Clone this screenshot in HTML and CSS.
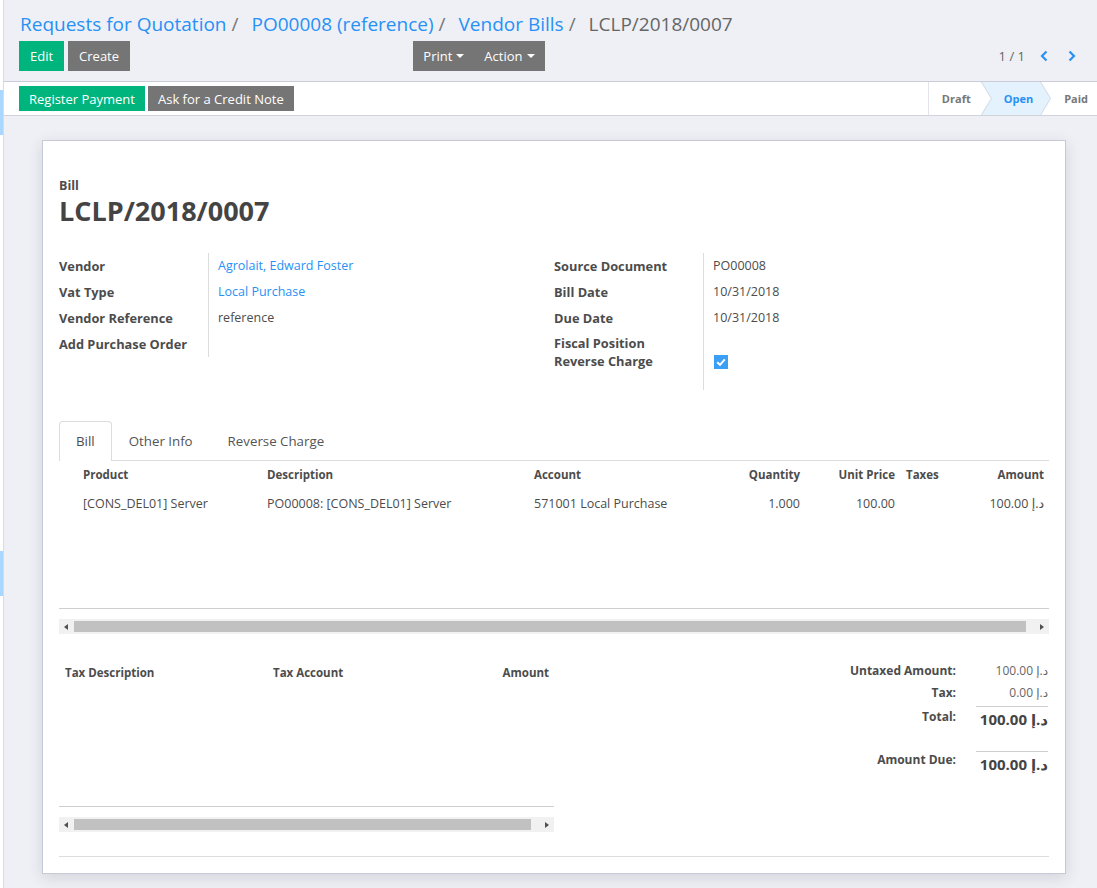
FILE: index.html
```html
<!DOCTYPE html>
<html lang="en">
<head>
<meta charset="utf-8">
<title>LCLP/2018/0007</title>
<link rel="stylesheet" href="styles.css">
</head>
<body>
<div class="app">
  <div class="sidebar">
    <div class="sb-hl"></div>
    <div class="sb-gap"></div>
    <div class="sb-hl"></div>
  </div>
  <div class="main">
    <div class="cpanel">
      <ol class="breadcrumb">
        <li><a href="#">Requests for Quotation</a></li>
        <li><a href="#">PO00008 (reference)</a></li>
        <li><a href="#">Vendor Bills</a></li>
        <li class="active">LCLP/2018/0007</li>
      </ol>
      <div class="cp-row">
        <div class="cp-left">
          <div class="cp-buttons">
            <button class="btn btn-primary">Edit</button>
            <button class="btn btn-secondary">Create</button>
          </div>
          <div class="btn-group">
            <button class="btn btn-secondary">Print <span class="caret"></span></button>
            <button class="btn btn-secondary">Action <span class="caret"></span></button>
          </div>
        </div>
        <div class="pager">
          <span class="pager-value">1 / 1</span>
          <button class="pager-btn" aria-label="Previous"><svg width="8" height="12" viewBox="0 0 8 12"><polyline points="6.5,1.5 2,6 6.5,10.5" fill="none" stroke="#2891f5" stroke-width="2.2"/></svg></button>
          <button class="pager-btn" aria-label="Next"><svg width="8" height="12" viewBox="0 0 8 12"><polyline points="1.5,1.5 6,6 1.5,10.5" fill="none" stroke="#2891f5" stroke-width="2.2"/></svg></button>
        </div>
      </div>
    </div>

    <div class="statusbar">
      <div class="sb-buttons">
        <button class="btn btn-sm btn-primary">Register Payment</button>
        <button class="btn btn-sm btn-secondary">Ask for a Credit Note</button>
      </div>
      <div class="states">
        <div class="state state-draft">Draft</div>
        <div class="state state-open">
          <svg class="chev chev-left" width="11" height="33" viewBox="0 0 11 33"><polyline points="0.5,0 10.5,16.5 0.5,33" fill="none" stroke="#d6dbe2" stroke-width="1"/></svg>
          Open
          <svg class="chev chev-right" width="11" height="33" viewBox="0 0 11 33"><polyline points="0.5,0 10.5,16.5 0.5,33" fill="none" stroke="#d6dbe2" stroke-width="1"/></svg>
        </div>
        <div class="state state-paid">Paid</div>
      </div>
    </div>

    <div class="content">
      <div class="sheet">
        <div class="title-block">
          <div class="doc-type">Bill</div>
          <h1 class="doc-name">LCLP/2018/0007</h1>
        </div>

        <div class="groups">
          <div class="group">
            <div class="lbl">Vendor</div><div class="val"><a href="#">Agrolait, Edward Foster</a></div>
            <div class="lbl">Vat Type</div><div class="val"><a href="#">Local Purchase</a></div>
            <div class="lbl">Vendor Reference</div><div class="val">reference</div>
            <div class="lbl">Add Purchase Order</div><div class="val"></div>
          </div>
          <div class="group">
            <div class="lbl">Source Document</div><div class="val">PO00008</div>
            <div class="lbl">Bill Date</div><div class="val">10/31/2018</div>
            <div class="lbl">Due Date</div><div class="val">10/31/2018</div>
            <div class="lbl lbl-tall">Fiscal Position Reverse Charge</div>
            <div class="val val-check"><span class="checkbox"><svg width="14" height="14" viewBox="0 0 14 14"><polyline points="3.2,7.2 6,9.8 10.8,4.4" fill="none" stroke="#fff" stroke-width="2"/></svg></span></div>
          </div>
        </div>

        <ul class="tabs">
          <li class="tab active">Bill</li>
          <li class="tab">Other Info</li>
          <li class="tab">Reverse Charge</li>
        </ul>

        <div class="list-wrap">
          <table class="lines">
            <colgroup>
              <col style="width:24px"><col style="width:184px"><col style="width:267px"><col style="width:206px"><col style="width:60px"><col style="width:95px"><col style="width:65px"><col style="width:84px"><col style="width:5px">
            </colgroup>
            <thead>
              <tr>
                <th></th><th>Product</th><th>Description</th><th>Account</th><th class="r">Quantity</th><th class="r">Unit Price</th><th class="taxes">Taxes</th><th class="r">Amount</th><th></th>
              </tr>
            </thead>
            <tbody>
              <tr>
                <td></td><td>[CONS_DEL01] Server</td><td>PO00008: [CONS_DEL01] Server</td><td>571001 Local Purchase</td><td class="r">1.000</td><td class="r">100.00</td><td class="taxes"></td><td class="r">100.00 د.إ</td><td></td>
              </tr>
            </tbody>
          </table>
        </div>
        <div class="hscroll">
          <span class="sc-btn"><span class="tri tri-left"></span></span>
          <span class="sc-thumb"></span>
          <span class="sc-rest" style="width:8px"></span>
          <span class="sc-btn"><span class="tri tri-right"></span></span>
        </div>

        <div class="bottom">
          <div class="tax-col">
            <div class="tax-wrap">
              <table class="tax-lines">
                <colgroup><col style="width:208px"><col style="width:153px"><col style="width:134px"></colgroup>
                <thead>
                  <tr><th>Tax Description</th><th>Tax Account</th><th class="r">Amount</th></tr>
                </thead>
              </table>
            </div>
            <div class="hscroll">
              <span class="sc-btn"><span class="tri tri-left"></span></span>
              <span class="sc-thumb"></span>
              <span class="sc-rest" style="width:8px"></span>
              <span class="sc-btn"><span class="tri tri-right"></span></span>
            </div>
          </div>
          <div class="totals">
            <div class="t-lbl">Untaxed Amount:</div><div class="t-val">100.00 د.إ</div>
            <div class="t-lbl">Tax:</div><div class="t-val">0.00 د.إ</div>
            <div class="t-lbl t-big-lbl">Total:</div><div class="t-val t-big">100.00 د.إ</div>
            <div class="t-lbl due-lbl">Amount Due:</div><div class="t-val t-big due-val">100.00 د.إ</div>
          </div>
        </div>

        <div class="sheet-end"></div>
      </div>
    </div>
  </div>
</div>
</body>
</html>
```
FILE: styles.css
```css
* { box-sizing: border-box; }

html, body {
  margin: 0;
  padding: 0;
}

body {
  background: #eef0f5;
  font-family: "Open Sans", "DejaVu Sans", sans-serif;
  font-size: 13px;
  color: #4c4c4c;
}

a { color: #2891f5; text-decoration: none; }

.app {
  display: flex;
  min-height: 888px;
}

/* left strip of the underlying app */
.sidebar {
  width: 4px;
  flex: none;
  background: #fff;
  border-right: 1px solid #d8dbe3;
  display: flex;
  flex-direction: column;
  padding-top: 90px;
}
.sb-hl { height: 45px; background: #a9d7ff; }
.sb-gap { height: 416px; }

.main { flex: 1; min-width: 0; }

/* control panel */
.cpanel {
  padding: 10px 15px 10px 15px;
  border-bottom: 1px solid #c9ccd8;
}

.breadcrumb {
  list-style: none;
  margin: 0 0 3px 1px;
  padding: 0;
  display: flex;
  font-size: 19px;
  line-height: 28px;
}
.breadcrumb li + li::before {
  content: "/";
  color: #777;
  margin: 0 13px 0 5px;
}
.breadcrumb .active { color: #666; }

.cp-row {
  display: flex;
  align-items: center;
  justify-content: space-between;
}
.cp-left {
  width: 50%;
  display: flex;
  justify-content: space-between;
  padding-right: 6px;
}
.cp-buttons { display: flex; gap: 4px; }
.btn-group { display: flex; }

.btn {
  height: 30px;
  padding: 0 11px;
  border: none;
  border-radius: 0;
  font-family: "Open Sans", sans-serif;
  font-size: 13px;
  color: #fff;
  cursor: pointer;
  display: inline-flex;
  align-items: center;
}
.btn-group .btn { padding: 0 10px; }
.btn-primary { background: #00b57d; }
.btn-secondary { background: #757575; }
.btn-sm { height: 25px; padding: 0 10px; font-size: 13px; }

.caret {
  display: inline-block;
  width: 0;
  height: 0;
  margin-left: 4px;
  border-top: 4px solid #fff;
  border-left: 4px solid transparent;
  border-right: 4px solid transparent;
}

.pager {
  display: flex;
  align-items: center;
  color: #666;
  margin-right: -4px;
}
.pager-value { margin-right: 5px; }
.pager-btn {
  background: none;
  border: none;
  padding: 0 10px;
  height: 30px;
  display: flex;
  align-items: center;
}

/* status bar */
.statusbar {
  height: 34px;
  background: #fff;
  border-bottom: 1px solid #d0d3dc;
  display: flex;
  justify-content: space-between;
  align-items: stretch;
  padding-left: 15px;
}
.sb-buttons {
  display: flex;
  align-items: center;
  gap: 3px;
}
.states {
  display: flex;
  border-left: 1px solid #e2e4ea;
}
.state {
  display: flex;
  align-items: center;
  font-size: 11px;
  font-weight: 700;
  color: #777;
}
.state-draft { padding: 0 10px 0 13px; }
.state-open {
  position: relative;
  isolation: isolate;
  padding: 0 18px 0 23px;
  color: #2891f5;
}
.state-open::before {
  content: "";
  position: absolute;
  inset: 0;
  z-index: -1;
  background: #e3f2fd;
  clip-path: polygon(0 0, calc(100% - 10px) 0, 100% 50%, calc(100% - 10px) 100%, 0 100%, 10px 50%);
}
.chev { position: absolute; top: 0; }
.chev-left { left: 0; }
.chev-right { right: 0; }
.state-paid { padding: 0 9px 0 13px; }

/* content */
.content {
  padding: 24px 31px 14px 38px;
}
.sheet {
  background: #fff;
  border: 1px solid #c8c9d6;
  box-shadow: 0 4px 14px rgba(40, 45, 70, 0.14);
  padding: 36px 16px 16px;
}

.title-block { margin-bottom: 26px; }
.doc-type {
  font-size: 12.5px;
  font-weight: 700;
  line-height: 18px;
}
.doc-name {
  margin: 0;
  font-size: 27px;
  line-height: 32px;
  font-weight: 700;
  color: #444;
}

.groups {
  display: grid;
  grid-template-columns: 495px 495px;
}
.group {
  display: grid;
  grid-template-columns: 150px 1fr;
  align-content: start;
}
.lbl {
  font-weight: 700;
  font-size: 12.8px;
  line-height: 18px;
  padding: 4px 8px 4px 0;
  border-right: 1px solid #dcdcdc;
  color: #4c4c4c;
}
.val {
  line-height: 18px;
  padding: 4px 0 4px 9px;
  font-size: 12.5px;
}
.lbl-tall { padding-top: 3px; padding-bottom: 20px; }
.val-check { display: flex; align-items: center; padding-top: 6px; }
.checkbox {
  width: 14px;
  height: 14px;
  background: #3a9ff5;
  display: block;
  margin-left: 1px;
}
.checkbox svg { display: block; }

/* tabs */
.tabs {
  list-style: none;
  margin: 31px 0 0;
  padding: 0;
  display: flex;
  border-bottom: 1px solid #dcdcdc;
}
.tab {
  padding: 10px 17px 9px 16px;
  line-height: 19px;
  border: 1px solid transparent;
  border-bottom: none;
  margin-bottom: -1px;
  color: #555;
  font-size: 13.3px;
}
.tab.active {
  border-color: #dcdcdc;
  border-radius: 4px 4px 0 0;
  background: #fff;
  padding: 10px 16px 10px;
  color: #4c4c4c;
}

/* order lines */
.list-wrap {
  height: 148px;
  border-bottom: 1px solid #cfcfcf;
}
table {
  border-collapse: collapse;
  table-layout: fixed;
  width: 100%;
}
.lines th {
  font-size: 11.5px;
  font-weight: 700;
  text-align: left;
  height: 27px;
  padding: 0;
  color: #4c4c4c;
}
.lines td {
  height: 30px;
  padding: 0;
  font-size: 12.5px;
  white-space: nowrap;
}
.lines .r, .tax-lines .r { text-align: right; }
.lines .taxes { padding-left: 11px; }

/* fake horizontal scrollbar */
.hscroll {
  display: flex;
  height: 15px;
  margin-top: 10px;
  background: #f1f1f1;
}
.sc-btn {
  width: 15px;
  flex: none;
  display: flex;
  align-items: center;
  justify-content: center;
}
.sc-thumb {
  flex: 1;
  margin: 2px 0 2px;
  background: #c1c1c1;
}
.sc-rest { flex: none; }
.tri { width: 0; height: 0; border-top: 3.5px solid transparent; border-bottom: 3.5px solid transparent; }
.tri-left { border-right: 4px solid #505050; margin-left: -1px; }
.tri-right { border-left: 4px solid #505050; margin-left: 1px; }

/* bottom: tax table and totals */
.bottom {
  display: grid;
  grid-template-columns: 495px 495px;
  margin-top: 26px;
}
.tax-wrap {
  height: 147px;
  border-bottom: 1px solid #cfcfcf;
}
.tax-lines th {
  font-size: 11.5px;
  font-weight: 700;
  text-align: left;
  height: 24px;
  padding: 0 5px 0 6px;
  color: #4c4c4c;
}

.totals {
  display: grid;
  grid-template-columns: 1fr 72px;
  column-gap: 20px;
  align-content: start;
  padding-right: 1px;
}
.t-lbl {
  text-align: right;
  font-weight: 700;
  font-size: 12px;
  line-height: 22px;
}
.t-val {
  text-align: right;
  font-size: 12px;
  line-height: 22px;
  color: #666;
  white-space: nowrap;
}
.t-big-lbl { padding-top: 2px; }
.t-val.t-big {
  border-top: 1px solid #cfcfcf;
  margin-top: 2px;
  font-size: 15px;
  font-weight: 700;
  color: #444;
  line-height: 24px;
}
.t-lbl.due-lbl { margin-top: 18px; }
.t-val.due-val { margin-top: 20px; }

.sheet-end {
  margin-top: 24px;
  border-top: 1px solid #dcdcdc;
}
```
